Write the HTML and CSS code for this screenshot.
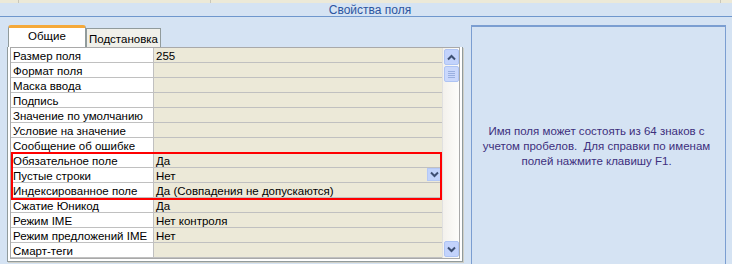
FILE: index.html
```html
<!DOCTYPE html>
<html lang="ru">
<head>
  <meta charset="UTF-8">
  <title>Свойства поля</title>
  <link rel="stylesheet" href="styles.css">
</head>
<body>
  <div class="topstrip">
    <span class="cell c1"></span>
    <span class="cell c2"></span>
    <span class="cell c3"></span>
  </div>
  <div class="title">Свойства поля</div>

  <div class="main">
    <div class="left">
      <div class="tabs">
        <div class="tab active">Общие</div>
        <div class="tab">Подстановка</div>
      </div>
      <div class="frame">
        <div class="grid">
          <div class="rows">
            <div class="row"><span class="lbl">Размер поля</span><span class="val">255</span></div>
            <div class="row"><span class="lbl">Формат поля</span><span class="val"></span></div>
            <div class="row"><span class="lbl">Маска ввода</span><span class="val"></span></div>
            <div class="row"><span class="lbl">Подпись</span><span class="val"></span></div>
            <div class="row"><span class="lbl">Значение по умолчанию</span><span class="val"></span></div>
            <div class="row"><span class="lbl">Условие на значение</span><span class="val"></span></div>
            <div class="row"><span class="lbl">Сообщение об ошибке</span><span class="val"></span></div>
            <div class="row"><span class="lbl">Обязательное поле</span><span class="val">Да</span></div>
            <div class="row"><span class="lbl">Пустые строки</span><span class="val">Нет<span class="drop"><svg width="13" height="13" viewBox="0 0 13 13"><path d="M3 4.5 L6.5 8 L10 4.5" fill="none" stroke="#3d4f73" stroke-width="2"/></svg></span></span></div>
            <div class="row"><span class="lbl">Индексированное поле</span><span class="val">Да (Совпадения не допускаются)</span></div>
            <div class="row"><span class="lbl">Сжатие Юникод</span><span class="val">Да</span></div>
            <div class="row"><span class="lbl">Режим IME</span><span class="val">Нет контроля</span></div>
            <div class="row"><span class="lbl">Режим предложений IME</span><span class="val">Нет</span></div>
            <div class="row"><span class="lbl">Смарт-теги</span><span class="val"></span></div>
            <div class="highlight"></div>
          </div>
          <div class="scroll">
            <div class="sbtn"><svg width="13" height="13" viewBox="0 0 13 13"><path d="M3 8.5 L6.5 5 L10 8.5" fill="none" stroke="#3d4f73" stroke-width="2"/></svg></div>
            <div class="thumb"><svg width="9" height="9" viewBox="0 0 9 9"><path d="M1 1.5 H8 M1 3.5 H8 M1 5.5 H8 M1 7.5 H8" stroke="#9ab0e0" stroke-width="1"/></svg></div>
            <div class="track"></div>
            <div class="sbtn"><svg width="13" height="13" viewBox="0 0 13 13"><path d="M3 4.5 L6.5 8 L10 4.5" fill="none" stroke="#3d4f73" stroke-width="2"/></svg></div>
          </div>
        </div>
      </div>
    </div>

    <div class="help">
      <p>Имя поля может состоять из 64 знаков с учетом пробелов.&nbsp; Для справки по именам полей нажмите клавишу F1.</p>
    </div>
  </div>
</body>
</html>
```

FILE: styles.css
```css
* {
  box-sizing: border-box;
  margin: 0;
  padding: 0;
}

body {
  width: 732px;
  height: 264px;
  overflow: hidden;
  background: #d5e3f3;
  font-family: "Liberation Sans", Arial, sans-serif;
  font-size: 11px;
  color: #000;
}

.topstrip {
  display: flex;
  height: 3px;
  background: #ece9d8;
}

.topstrip .cell {
  border-right: 1px solid #c9c7ba;
}

.c1 { width: 19px; }
.c2 { width: 192px; }
.c3 { width: 510px; }

.title {
  height: 14px;
  text-align: center;
  color: #2c55a0;
  font-size: 12px;
  line-height: 14px;
  padding-left: 8px;
  border-bottom: 1px solid #6f97cd;
}

.main {
  display: flex;
  padding: 8px 6px 0 7px;
  gap: 8px;
}

.left {
  width: 456px;
}

.tabs {
  display: flex;
  height: 22px;
  align-items: flex-end;
  padding-left: 1px;
}

.tab {
  height: 19px;
  padding: 2px 2px 0;
  background: #f0f0ea;
  border: 1px solid #919b9c;
  border-bottom: none;
  font-size: 11.5px;
  line-height: 16px;
}

.tab.active {
  width: 78px;
  height: 22px;
  text-align: center;
  background: #fff;
  border-top: 3px solid #f5a93a;
  border-radius: 3px 3px 0 0;
  line-height: 17px;
  padding-top: 0;
}

.frame {
  background: #fff;
  border: 1px solid #919b9c;
  border-top: none;
  padding: 0 2px 3px 2px;
  height: 215px;
  box-shadow: 1px 1px 0 #d0d0c8;
}

.grid {
  display: flex;
  border: 1px solid #a9a9a9;
  background: #fff;
}

.rows {
  position: relative;
  width: 432px;
}

.row {
  display: flex;
  height: 15px;
  border-bottom: 1px solid #c0c0c0;
  line-height: 14px;
  font-size: 11.5px;
}

.row:last-of-type {
  border-bottom: none;
}

.lbl,
.val {
  padding-top: 1px;
}

.lbl {
  width: 143px;
  padding-left: 2px;
  border-right: 1px solid #c0c0c0;
  white-space: nowrap;
  overflow: hidden;
}

.val {
  flex: 1;
  display: flex;
  justify-content: space-between;
  padding-left: 2px;
  background: #ece9d8;
}

.drop {
  width: 15px;
  height: 13px;
  margin-top: -1px;
  display: flex;
  align-items: center;
  justify-content: center;
  background: #c1d3fb;
  border: 1px solid #b4c8f6;
}

.highlight {
  position: absolute;
  left: 0;
  top: 104px;
  width: 431px;
  height: 48px;
  border: 2px solid #ff0000;
}

.scroll {
  width: 17px;
  display: flex;
  flex-direction: column;
  align-items: center;
  padding: 1px 0;
  background: linear-gradient(to right, #f3f1ec, #fdfdfb);
  border-left: 1px solid #e0e0e0;
}

.sbtn,
.thumb {
  width: 15px;
  height: 16px;
  display: flex;
  align-items: center;
  justify-content: center;
  background: #c3d3fc;
  border: 1px solid #aec4f4;
  border-radius: 2px;
}

.thumb {
  background: #cad8fc;
  margin-top: 1px;
}

.track {
  flex: 1;
}

.help {
  width: 256px;
  height: 250px;
  border: 1px solid #7b9ed1;
  border-top: 2px solid #7b9ed1;
  display: flex;
  align-items: center;
  justify-content: center;
  padding: 0 12px 8px 8px;
}

.help p {
  text-align: center;
  color: #3d2f7d;
  font-size: 11.5px;
  line-height: 15px;
}
```
